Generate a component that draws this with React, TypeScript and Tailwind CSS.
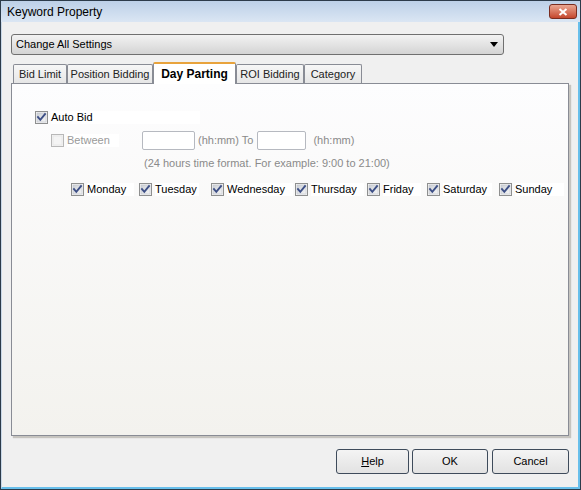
import React from "react";

const font = { fontFamily: '"Liberation Sans", Arial, sans-serif' };

function Check({ checked = false, disabled = false }: { checked?: boolean; disabled?: boolean }) {
  return (
    <svg width="13" height="13" viewBox="0 0 13 13" className="shrink-0">
      <defs>
        <linearGradient id="cbIn" x1="0" y1="0" x2="1" y2="1">
          <stop offset="0" stopColor="#cbcfd5" />
          <stop offset="1" stopColor="#f6f6f6" />
        </linearGradient>
      </defs>
      <rect x="0.5" y="0.5" width="12" height="12" fill="#f4f4f4" stroke={disabled ? "#b8b8b8" : "#8e8f8f"} />
      <rect x="2" y="2" width="9" height="9" fill={disabled ? "#f4f4f4" : "url(#cbIn)"} stroke={disabled ? "#e2e2e2" : "#c0c4cb"} strokeWidth="0.6" />
      {checked && (
        <path d="M3 6.2 L5.3 8.8 L10 3.2" fill="none" stroke="#3d4f86" strokeWidth="1.9" strokeLinecap="square" />
      )}
    </svg>
  );
}

function Tab({ label, active = false, width }: { label: string; active?: boolean; width: string }) {
  if (active) {
    return (
      <div className={`${width} h-[22px] -mb-px relative z-10 bg-white border border-[#898c95] border-b-0 border-t-2 border-t-[#e8a33c] rounded-t-[2px] flex items-center justify-center text-[12px] font-bold text-black`}>
        {label}
      </div>
    );
  }
  return (
    <div className={`${width} h-[19px] bg-linear-to-b from-[#f7f7f7] to-[#e6e6e6] border border-[#898c95] border-b-0 rounded-t-[2px] flex items-center justify-center text-[11px] text-[#222]`}>
      {label}
    </div>
  );
}

function Btn({ children, width }: { children: React.ReactNode; width: string }) {
  return (
    <div className={`${width} h-[25px] rounded-[3px] border border-[#3e4b5b] bg-linear-to-b from-[#f4f4f4] to-[#e2e2e2] flex items-center justify-center text-[11px] text-black`}>
      {children}
    </div>
  );
}

const days: { name: string; w: string; lw: string }[] = [
  { name: "Monday", w: "w-[68px]", lw: "w-[47px]" },
  { name: "Tuesday", w: "w-[72px]", lw: "w-[44px]" },
  { name: "Wednesday", w: "w-[84px]", lw: "w-[66px]" },
  { name: "Thursday", w: "w-[72px]", lw: "w-[53px]" },
  { name: "Friday", w: "w-[60px]", lw: "w-[38px]" },
  { name: "Saturday", w: "w-[72px]", lw: "w-[49px]" },
  { name: "Sunday", w: "w-[65px]", lw: "w-[50px]" },
];

export default function App() {
  return (
    <div style={font} className="w-[581px] h-[490px] border border-[#2c3b4a] flex flex-col bg-[#f0f0f0]">
      {/* title bar */}
      <div className="h-[21px] shrink-0 bg-linear-to-b from-[#bcd0e8] to-[#dbe6f3] flex items-center justify-between pl-[6px] pr-[3px]">
        <span className="text-[12px] text-black">Keyword Property</span>
        <div className="w-[28px] h-[15px] rounded-[3px] border border-[#7a2d20] bg-linear-to-b from-[#e9a692] to-[#c4462c] flex items-center justify-center">
          <svg width="10" height="8" viewBox="0 0 10 8">
            <path d="M1.5 1 L8.5 7 M8.5 1 L1.5 7" stroke="white" strokeWidth="2" />
          </svg>
        </div>
      </div>

      {/* body */}
      <div className="flex-1 flex flex-col border-l border-l-[#c9d8e8] border-r-2 border-r-[#68bfeb] border-b-2 border-b-[#68bfeb] pl-[9px] pr-[8px]">
        {/* dropdown */}
        <div className="mt-[12px] w-[493px] h-[21px] rounded-[3px] border border-[#707070] bg-linear-to-b from-[#f3f3f3] to-[#d4d4d4] flex items-center justify-between pl-[4px] pr-[5px]">
          <span className="text-[11px] text-black">Change All Settings</span>
          <svg width="8" height="5" viewBox="0 0 8 5">
            <path d="M0 0 H8 L4 5 Z" fill="#000" />
          </svg>
        </div>

        {/* tabs */}
        <div className="mt-[7px] flex items-end pl-[2px]">
          <Tab label="Bid Limit" width="w-[54px]" />
          <Tab label="Position Bidding" width="w-[86px]" />
          <Tab label="Day Parting" width="w-[83px]" active />
          <Tab label="ROI Bidding" width="w-[68px]" />
          <Tab label="Category" width="w-[58px]" />
        </div>

        {/* panel */}
        <div className="w-[558px] h-[353px] border border-[#898c95] bg-linear-to-b from-[#fdfdfe] to-[#f3f2ee] shadow-[2px_2px_1px_rgba(120,115,100,0.35)] pt-[27px] pl-[23px] text-[11px] text-black">
          <div className="flex items-center h-[13px]">
            <Check checked />
            <span className="ml-[3px] w-[149px] bg-white leading-[13px]">Auto Bid</span>
          </div>

          <div className="mt-[7px] flex items-center h-[19px]">
            <div className="ml-[16px] flex items-center">
              <Check disabled />
              <span className="ml-[3px] w-[52px] bg-white leading-[13px] text-[#9a9a9a]">Between</span>
            </div>
            <div className="ml-[23px] w-[53px] h-[19px] bg-white border border-[#b6b9c0] rounded-[2px]" />
            <span className="ml-[3px] text-[#8a8a8a]">(hh:mm) To</span>
            <div className="ml-[4px] w-[49px] h-[19px] bg-white border border-[#b6b9c0] rounded-[2px]" />
            <span className="ml-[7px] text-[#8a8a8a]">(hh:mm)</span>
          </div>

          <div className="mt-[7px] ml-[109px] text-[#8a8a8a] leading-[13px]">
            (24 hours time format. For example: 9:00 to 21:00)
          </div>

          <div className="mt-[13px] ml-[36px] flex items-center h-[13px]">
            {days.map((d) => (
              <div key={d.name} className={`${d.w} flex items-center`}>
                <Check checked />
                <span className={`ml-[3px] ${d.lw} bg-white leading-[13px]`}>{d.name}</span>
              </div>
            ))}
          </div>
        </div>

        {/* buttons */}
        <div className="mt-[13px] flex justify-end pr-[1px]">
          <Btn width="w-[73px]">
            <span>
              <span className="underline">H</span>elp
            </span>
          </Btn>
          <div className="ml-[3px]">
            <Btn width="w-[76px]">OK</Btn>
          </div>
          <div className="ml-[4px]">
            <Btn width="w-[77px]">Cancel</Btn>
          </div>
        </div>
      </div>
    </div>
  );
}
